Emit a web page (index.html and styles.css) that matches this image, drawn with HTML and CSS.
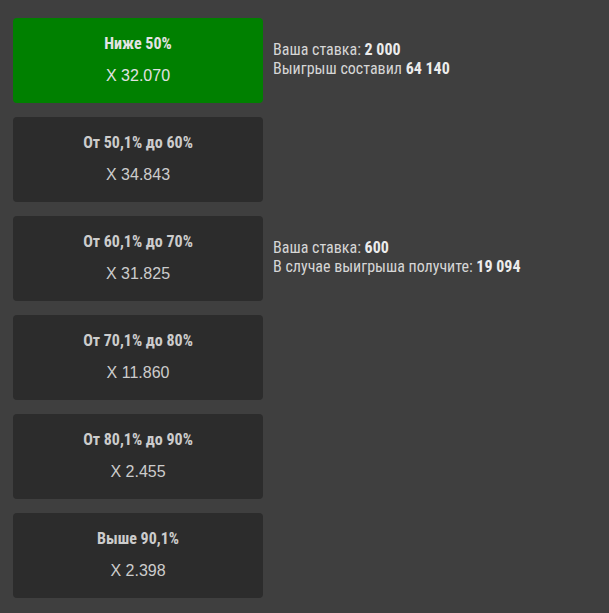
FILE: index.html
```html
<!DOCTYPE html>
<html lang="ru">
<head>
<meta charset="utf-8">
<title>Ставки</title>
<link rel="stylesheet" href="styles.css">
</head>
<body>
<div class="list">
  <div class="row">
    <div class="card card--active">
      <div class="card__title">Ниже 50%</div>
      <div class="card__value">X 32.070</div>
    </div>
    <div class="info">
      <div>Ваша ставка: <b>2 000</b></div>
      <div>Выигрыш составил <b>64 140</b></div>
    </div>
  </div>
  <div class="row">
    <div class="card">
      <div class="card__title">От 50,1% до 60%</div>
      <div class="card__value">X 34.843</div>
    </div>
  </div>
  <div class="row">
    <div class="card">
      <div class="card__title">От 60,1% до 70%</div>
      <div class="card__value">X 31.825</div>
    </div>
    <div class="info">
      <div>Ваша ставка: <b>600</b></div>
      <div>В случае выигрыша получите: <b>19 094</b></div>
    </div>
  </div>
  <div class="row">
    <div class="card">
      <div class="card__title">От 70,1% до 80%</div>
      <div class="card__value">X 11.860</div>
    </div>
  </div>
  <div class="row">
    <div class="card">
      <div class="card__title">От 80,1% до 90%</div>
      <div class="card__value">X 2.455</div>
    </div>
  </div>
  <div class="row">
    <div class="card">
      <div class="card__title">Выше 90,1%</div>
      <div class="card__value">X 2.398</div>
    </div>
  </div>
</div>
</body>
</html>
```
FILE: styles.css
```css
html, body {
  margin: 0;
  padding: 0;
  background: #3f3f3f;
}
body {
  width: 609px;
  height: 613px;
  overflow: hidden;
}
.list {
  display: flex;
  flex-direction: column;
  gap: 14px;
  padding: 18px 0 0 13px;
}
.row {
  display: flex;
  align-items: center;
  gap: 10px;
}
.card {
  width: 250px;
  height: 85px;
  box-sizing: border-box;
  padding-top: 16px;
  background: #2c2c2c;
  border-radius: 4px;
  text-align: center;
  flex: none;
}
.card--active {
  background: #008000;
}
.card__title {
  font-family: "Roboto Condensed", "Liberation Sans Narrow", "DejaVu Sans Condensed", Roboto, sans-serif;
  font-weight: 700;
  font-size: 16px;
  line-height: 20px;
  color: #cccccc;
}
.card--active .card__title {
  color: #e4e4e4;
}
.card__value {
  margin-top: 12px;
  font-family: "Liberation Sans", Arial, sans-serif;
  font-size: 16px;
  line-height: 20px;
  color: #cccccc;
}
.card--active .card__value {
  color: #e2e2e2;
}
.info {
  margin-bottom: 3px;
  font-family: "Roboto Condensed", "Liberation Sans Narrow", "DejaVu Sans Condensed", Roboto, sans-serif;
  font-size: 16px;
  line-height: 19px;
  color: #d6d6d6;
}
.info b {
  font-weight: 700;
  color: #ececec;
}
```
